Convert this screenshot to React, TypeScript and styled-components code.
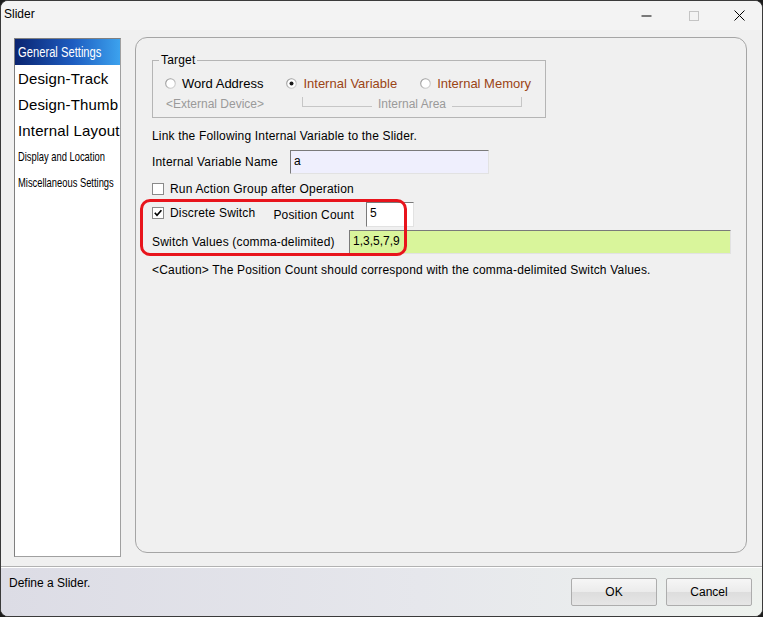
import React from "react";
import styled, { createGlobalStyle } from "styled-components";

const GlobalStyle = createGlobalStyle`
  html, body {
    margin: 0;
    padding: 0;
    background: #1c1c1c;
  }
  body {
    font-family: "Liberation Sans", Arial, sans-serif;
    font-size: 12px;
    color: #000;
  }
  * {
    box-sizing: border-box;
  }
`;

const Window = styled.div`
  width: 763px;
  height: 617px;
  border: 1px solid #3a3a3a;
  border-radius: 8px;
  background: #f0f0f0;
  overflow: hidden;
  display: flex;
  flex-direction: column;
`;

const TitleBar = styled.div`
  height: 29px;
  flex: none;
  display: flex;
  align-items: center;
  padding: 0 0 3px 3px;
  background: #f3f3f3;
`;

const TitleText = styled.div`
  font-size: 12px;
  color: #000;
`;

const Controls = styled.div`
  margin-left: auto;
  display: flex;
  align-items: center;
`;

const ControlBox = styled.div<{ $w: number }>`
  width: ${(p) => p.$w}px;
  height: 20px;
  display: flex;
  align-items: center;
  justify-content: center;
  padding-top: 3px;
`;

const Main = styled.div`
  height: 536px;
  flex: none;
  display: flex;
  align-items: flex-start;
  padding: 8px 0 0 13px;
`;

const PageList = styled.div`
  width: 107px;
  height: 519px;
  flex: none;
  background: #fff;
  border: 1px solid #a0a0a0;
  border-top-color: #7f7f7f;
  border-left-color: #7f7f7f;
  overflow: hidden;
`;

const PageItem = styled.div<{ $selected?: boolean }>`
  height: 26px;
  display: flex;
  align-items: center;
  padding-left: 3px;
  white-space: nowrap;
  color: ${(p) => (p.$selected ? "#fff" : "#000")};
  background: ${(p) =>
    p.$selected ? "linear-gradient(90deg, #0a2470 0%, #1d5cc0 55%, #3ca2ee 100%)" : "transparent"};
`;

const PageLabel = styled.span<{ $kind: "big" | "narrow" | "small" }>`
  display: inline-block;
  transform-origin: left center;
  font-size: ${(p) => (p.$kind === "big" ? "15px" : p.$kind === "narrow" ? "14px" : "13px")};
  letter-spacing: ${(p) => (p.$kind === "big" ? "0.15px" : "0")};
  transform: ${(p) => (p.$kind === "big" ? "none" : p.$kind === "narrow" ? "scaleX(0.8)" : "scaleX(0.72)")};
`;

const Panel = styled.div`
  position: relative;
  width: 612px;
  height: 516px;
  margin: -1px 0 0 14px;
  border: 1px solid #a5a5a5;
  border-radius: 12px;
  padding: 15px 16px;
  display: flex;
  flex-direction: column;
  align-items: flex-start;
  letter-spacing: 0.18px;
`;

const GroupBox = styled.fieldset`
  width: 394px;
  margin: 0;
  padding: 8px 12px 6px 12px;
  border: 1px solid #b5b5b5;
  border-radius: 0;
`;

const Legend = styled.legend`
  margin-left: -6px;
  padding: 0 2px;
  font-size: 12px;
  line-height: 14px;
`;

const RadioRow = styled.div`
  display: flex;
  align-items: center;
  gap: 23px;
  height: 16px;
`;

const RadioItem = styled.div<{ $accent?: boolean }>`
  display: flex;
  align-items: center;
  gap: 6px;
  font-size: 13px;
  letter-spacing: 0;
  color: ${(p) => (p.$accent ? "#9b4414" : "#000")};
`;

const SubRow = styled.div`
  display: flex;
  align-items: flex-start;
  height: 14px;
  margin-top: 6px;
  color: #9a9a9a;
  font-size: 12px;
  line-height: 14px;
  letter-spacing: 0;
`;

const ExtLabel = styled.div`
  width: 137px;
  padding-left: 1px;
`;

const Bracket = styled.div`
  width: 220px;
  display: flex;
  align-items: flex-start;
`;

const BracketSide = styled.div<{ $side: "left" | "right" }>`
  flex: 1;
  height: 10px;
  border-bottom: 1px solid #c6c6c6;
  border-${(p) => p.$side}: 1px solid #c6c6c6;
`;

const BracketText = styled.div`
  padding: 0 6px;
`;

const Text = styled.div<{ $mt?: number }>`
  margin-top: ${(p) => p.$mt ?? 0}px;
  font-size: 12px;
  line-height: 14px;
  white-space: nowrap;
`;

const FieldRow = styled.div<{ $mt: number; $h: number }>`
  display: flex;
  align-items: center;
  margin-top: ${(p) => p.$mt}px;
  height: ${(p) => p.$h}px;
`;

const FieldLabel = styled.div<{ $w?: number; $ml?: number }>`
  width: ${(p) => (p.$w ? `${p.$w}px` : "auto")};
  margin-left: ${(p) => p.$ml ?? 0}px;
  font-size: 12px;
  line-height: 14px;
  white-space: nowrap;
`;

const TextBox = styled.div<{ $w: number; $h: number; $bg: string; $ml?: number }>`
  width: ${(p) => p.$w}px;
  height: ${(p) => p.$h}px;
  margin-left: ${(p) => p.$ml ?? 0}px;
  background: ${(p) => p.$bg};
  border: 1px solid #e2e2e2;
  border-top-color: #7a7a7a;
  border-left-color: #7a7a7a;
  padding: 3px 0 0 3px;
  font-size: 12px;
  line-height: 14px;
  letter-spacing: 0;
`;

const CheckLabel = styled.div<{ $up?: number }>`
  display: flex;
  align-items: center;
  gap: 6px;
  margin-bottom: ${(p) => p.$up ?? 0}px;
  font-size: 12px;
  line-height: 14px;
  white-space: nowrap;
`;

const Highlight = styled.div`
  position: absolute;
  left: 4px;
  top: 161px;
  width: 267px;
  height: 57px;
  border: 3px solid #e8141c;
  border-radius: 10px;
  pointer-events: none;
`;

const Footer = styled.div`
  flex: 1;
  display: flex;
  align-items: flex-start;
  padding: 9px 10px 0 8px;
  border-top: 1px solid #b2b2b2;
  box-shadow: inset 0 1px 0 #ffffff;
  background: linear-gradient(90deg, #dcdce5 0%, #e6e7ec 55%, #eef2ee 100%);
`;

const Status = styled.div`
  font-size: 12px;
  line-height: 14px;
`;

const Buttons = styled.div`
  margin-left: auto;
  margin-top: 2px;
  display: flex;
  gap: 9px;
`;

const Button = styled.button`
  width: 86px;
  height: 28px;
  padding: 0;
  border: 1px solid #adadad;
  border-radius: 2px;
  background: linear-gradient(180deg, #f6f6f6 0%, #ebebeb 50%, #dddddd 51%, #e6e6e6 100%);
  font-family: "Liberation Sans", Arial, sans-serif;
  font-size: 12px;
  color: #000;
`;

const Radio: React.FC<{ on?: boolean }> = ({ on }) => (
  <svg width="11" height="11" viewBox="0 0 11 11">
    <defs>
      <linearGradient id={on ? "rg-on" : "rg-off"} x1="0" y1="0" x2="1" y2="1">
        <stop offset="0" stopColor="#8c8c8c" />
        <stop offset="1" stopColor="#dcdcdc" />
      </linearGradient>
    </defs>
    <circle cx="5.5" cy="5.5" r="4.8" fill="#fff" stroke={`url(#${on ? "rg-on" : "rg-off"})`} strokeWidth="1.1" />
    {on && <circle cx="5.5" cy="5.5" r="2" fill="#1a1a1a" />}
  </svg>
);

const Check: React.FC<{ on?: boolean }> = ({ on }) => (
  <svg width="12" height="12" viewBox="0 0 12 12">
    <rect x="0.5" y="0.5" width="11" height="11" fill="#fff" stroke="#8a8a8a" />
    {on && <path d="M2.8 5.8 L5 8.2 L9.4 3.2" fill="none" stroke="#000" strokeWidth="1.7" />}
  </svg>
);

const pages: { label: string; kind: "big" | "narrow" | "small"; selected?: boolean }[] = [
  { label: "General Settings", kind: "narrow", selected: true },
  { label: "Design-Track", kind: "big" },
  { label: "Design-Thumb", kind: "big" },
  { label: "Internal Layout", kind: "big" },
  { label: "Display and Location", kind: "small" },
  { label: "Miscellaneous Settings", kind: "small" },
];

export default function App() {
  return (
    <>
      <GlobalStyle />
      <Window>
        <TitleBar>
          <TitleText>Slider</TitleText>
          <Controls>
            <ControlBox $w={50}>
              <svg width="11" height="11" viewBox="0 0 11 11">
                <path d="M0.5 6 L10.5 6 M0.5 6.01 L10.5 6.01" stroke="#000" strokeWidth="1.2" />
              </svg>
            </ControlBox>
            <ControlBox $w={46}>
              <svg width="10" height="10" viewBox="0 0 10 10">
                <rect x="0.5" y="0.5" width="9" height="9" fill="none" stroke="#c4c4c4" />
              </svg>
            </ControlBox>
            <ControlBox $w={45}>
              <svg width="11" height="11" viewBox="0 0 11 11">
                <path d="M0.5 0.5 L10.5 10.5 M10.5 0.5 L0.5 10.5" stroke="#000" strokeWidth="1" />
              </svg>
            </ControlBox>
          </Controls>
        </TitleBar>

        <Main>
          <PageList>
            {pages.map((p) => (
              <PageItem key={p.label} $selected={p.selected}>
                <PageLabel $kind={p.kind}>{p.label}</PageLabel>
              </PageItem>
            ))}
          </PageList>

          <Panel>
            <GroupBox>
              <Legend>Target</Legend>
              <RadioRow>
                <RadioItem>
                  <Radio />
                  Word Address
                </RadioItem>
                <RadioItem $accent>
                  <Radio on />
                  Internal Variable
                </RadioItem>
                <RadioItem $accent>
                  <Radio />
                  Internal Memory
                </RadioItem>
              </RadioRow>
              <SubRow>
                <ExtLabel>&lt;External Device&gt;</ExtLabel>
                <Bracket>
                  <BracketSide $side="left" />
                  <BracketText>Internal Area</BracketText>
                  <BracketSide $side="right" />
                </Bracket>
              </SubRow>
            </GroupBox>

            <Text $mt={11}>Link the Following Internal Variable to the Slider.</Text>

            <FieldRow $mt={7} $h={24}>
              <FieldLabel $w={138}>Internal Variable Name</FieldLabel>
              <TextBox $w={199} $h={24} $bg="#efeffd">a</TextBox>
            </FieldRow>

            <FieldRow $mt={8} $h={14}>
              <CheckLabel>
                <Check />
                Run Action Group after Operation
              </CheckLabel>
            </FieldRow>

            <FieldRow $mt={6} $h={25}>
              <CheckLabel $up={4}>
                <Check on />
                Discrete Switch
              </CheckLabel>
              <FieldLabel $ml={18}>Position Count</FieldLabel>
              <TextBox $w={48} $h={25} $bg="#ffffff" $ml={12}>
                5
              </TextBox>
            </FieldRow>

            <FieldRow $mt={3} $h={24}>
              <FieldLabel $w={197}>Switch Values (comma-delimited)</FieldLabel>
              <TextBox $w={382} $h={24} $bg="#d9f59b">
                1,3,5,7,9
              </TextBox>
            </FieldRow>

            <Text $mt={9}>
              &lt;Caution&gt; The Position Count should correspond with the comma-delimited Switch Values.
            </Text>

            <Highlight />
          </Panel>
        </Main>

        <Footer>
          <Status>Define a Slider.</Status>
          <Buttons>
            <Button>OK</Button>
            <Button>Cancel</Button>
          </Buttons>
        </Footer>
      </Window>
    </>
  );
}
